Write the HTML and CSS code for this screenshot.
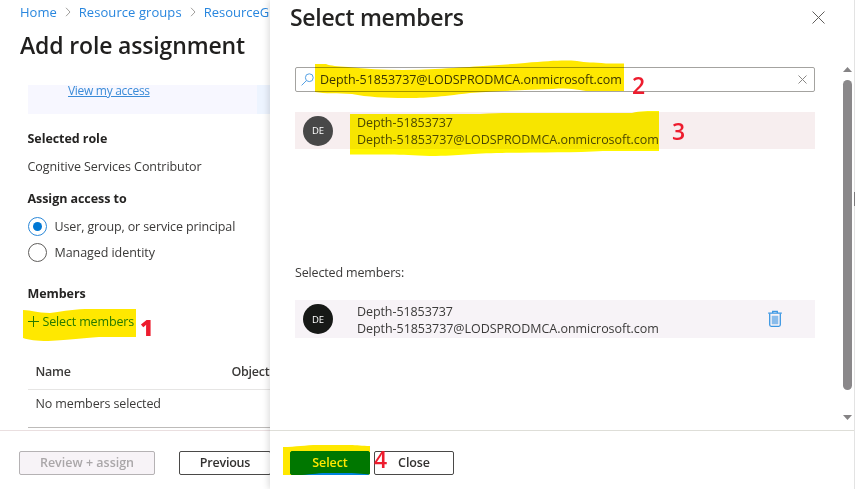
FILE: index.html
```html
<!DOCTYPE html>
<html lang="en">
<head>
<meta charset="utf-8">
<title>Add role assignment</title>
<link rel="stylesheet" href="styles.css">
</head>
<body>
<div class="app">
  <main class="blade">
    <nav class="crumbs">
      <a>Home</a><svg class="chev" viewBox="0 0 6 10"><path d="M1 .8 5 5 1 9.200"/></svg><a class="groups">Resource groups</a><svg class="chev" viewBox="0 0 6 10"><path d="M1 .8 5 5 1 9.200"/></svg><a>ResourceG</a>
    </nav>
    <h1 class="blade-title">Add role assignment</h1>
    <div class="content">
      <div class="banner"><a class="access">View my access</a></div>
      <h2 class="label role">Selected role</h2>
      <p class="value contributor">Cognitive Services Contributor</p>
      <h2 class="label assign">Assign access to</h2>
      <div class="option"><span class="radio checked"></span><span class="user-option">User, group, or service principal</span></div>
      <div class="option"><span class="radio"></span><span class="managed-option">Managed identity</span></div>
      <h2 class="label members">Members</h2>
      <a class="add"><svg viewBox="0 0 11 11"><path d="M5.500 0v11M0 5.500h11"/></svg><span>Select members</span></a>
      <div class="table">
        <div class="thead"><span class="name-col">Name</span><span>Object</span></div>
        <div class="tbody"><span>No members selected</span></div>
      </div>
    </div>
    <footer class="blade-footer">
      <button class="btn review">Review + assign</button>
      <button class="btn previous"><span>Previous</span></button>
    </footer>
  </main>
  <aside class="drawer">
    <header class="drawer-header">
      <h2><span>Select members</span></h2>
      <svg class="close" viewBox="0 0 13 13"><path d="M.5.5l12 12M12.500.5l-12 12"/></svg>
    </header>
    <div class="drawer-body">
      <div class="list">
        <div class="search">
          <svg class="lens" viewBox="0 0 13 13"><circle cx="8.300" cy="4.700" r="3.900"/><path d="M5.400 7.600.6 12.400"/></svg>
          <span class="email">Depth-51853737@LODSPRODMCA.onmicrosoft.com</span>
          <svg class="clear" viewBox="0 0 9 9"><path d="M.5.5l8 8M8.500.5l-8 8"/></svg>
        </div>
        <div class="person result">
          <span class="avatar">DE</span>
          <div class="who"><span class="short">Depth-51853737</span><span class="email">Depth-51853737@LODSPRODMCA.onmicrosoft.com</span></div>
        </div>
        <p class="selected-label"><span>Selected members:</span></p>
        <div class="person chosen">
          <span class="avatar">DE</span>
          <div class="who"><span class="short">Depth-51853737</span><span class="email">Depth-51853737@LODSPRODMCA.onmicrosoft.com</span></div>
          <svg class="trash" viewBox="0 0 14 18"><path class="can" d="M1.700 3.500v11.300q0 1.500 1.500 1.500h7.600q1.500 0 1.500-1.500V3.500"/><path class="lid" d="M.2 3.200h13.600M4.700 3V1.400h4.600V3"/><path class="slats" d="M4 6h6v8H4z"/></svg>
        </div>
      </div>
      <div class="scroll">
        <svg viewBox="0 0 9 5"><path d="M0 5 4.500 0 9 5z"/></svg>
        <span class="thumb"></span>
        <svg viewBox="0 0 9 5"><path d="M0 0h9L4.500 5z"/></svg>
      </div>
    </div>
    <footer class="drawer-footer">
      <button class="btn primary">Select</button>
      <button class="btn dismiss">Close</button>
    </footer>
  </aside>
  <span class="edge"></span>
  <svg class="marker" viewBox="0 0 855 489">
    <path d="M23 310C32 310 36 313 50 313C66 311 74 309 91 309H136V337H99C81 338 72 340 48 341C36 341 29 340 23 338Z"/>
    <path d="M315 64H326C331 66 337 66 348 67C374 70 405 71 435 69C480 66 500 65 525 63C550 61 563 60 577 61C586 63 593 62 606 63.500H624V91H586C574 89 567 88 553 89C525 90 497 91 470 93C438 97 427 98 405 98C386 98 367 97 352 94C337 93 325 94 315 92Z"/>
    <path class="on-row" d="M350 114H480C500 113 515 113 535 113H632C640 111 648 111 659 111V151H603C575 153 535 152 502 153C470 153 462 156 430 156C413 155 403 155 390 154.500H350Z"/>
    <path d="M283 447C296 447 305 445 318 445H350C357 445 362 446 370 446V474.500C362 474 355 473 345 473H326C316 473 309 475 298 475H283Z"/>
  </svg>
  <span class="step s1">1</span>
  <span class="step s2">2</span>
  <span class="step s3">3</span>
  <span class="step s4">4</span>
</div>
</body>
</html>
```
FILE: styles.css
```css
* { box-sizing: border-box; }
body { margin: 0; background: #fff; color: #3b3a39; font: 12.5px/17px "Open Sans", "Noto Sans", sans-serif; overflow: hidden; }
h1, h2, p { margin: 0; }
svg { display: block; fill: none; flex: none; }
.app { position: relative; display: grid; grid-template-columns: 270px 585px; height: 489px; overflow: hidden; }

.blade { display: flex; flex-direction: column; overflow: hidden; white-space: nowrap; }
.crumbs { display: flex; align-items: center; height: 24px; padding-left: 20px; font-size: 13px; color: #2886de; flex: none; }
.groups { letter-spacing: .07px; }
.chev { width: 6px; height: 10px; margin: 0 8px; stroke: #a19f9d; }
.blade-title { height: 61px; padding-left: 20px; font-size: 23px; line-height: 43px; font-weight: 600; letter-spacing: -.15px; color: #201f1e; flex: none; }
.content { height: 345px; padding-left: 27.5px; letter-spacing: -.06px; flex: none; }
.banner { height: 29px; padding-left: 40.5px; background: linear-gradient(90deg, #f7f7ff 229px, #edf4ff 229px); line-height: 11px; font-size: 12px; letter-spacing: -.3px; }
.access { color: #3a8bd8; text-decoration: underline; }
.label { font-size: 12.5px; line-height: 18px; font-weight: 700; color: #252423; }
.role { margin-top: 16px; }
.contributor { margin-top: 10px; line-height: 18px; }
.assign { margin-top: 14px; margin-bottom: 5px; }
.option { display: flex; align-items: center; gap: 8px; height: 26px; }
.user-option { letter-spacing: -.13px; }
.radio { display: grid; place-items: center; width: 19px; height: 19px; border: 1px solid #605e5c; border-radius: 50%; }
.checked { border-color: #2b88d8; }
.checked::after { content: ""; width: 9px; height: 9px; border-radius: 50%; background: #0078d4; }
.members { margin-top: 20px; }
.add { display: flex; align-items: center; gap: 4px; height: 20px; margin-top: 8px; color: #2886de; letter-spacing: -.15px; }
.add svg { width: 11px; height: 11px; stroke: #2886de; }
.table { margin-top: 22px; border-bottom: 1px solid #bdbbb9; }
.thead { display: grid; grid-template-columns: 196px 1fr; align-items: center; height: 37px; padding-left: 8px; border-bottom: 1px solid #e6e5e4; font-weight: 600; letter-spacing: -.25px; }
.tbody { display: flex; align-items: center; height: 37px; padding: 0 0 10px 8px; letter-spacing: -.12px; }
.blade-footer { display: flex; gap: 24px; height: 59px; padding: 20px 0 0 19px; border-top: 1px solid #eadfe0; flex: none; }

.btn { display: grid; place-items: center; height: 24px; padding: 0; border: 1px solid #4a4948; border-radius: 2px; background: #fff; color: #323130; font: 600 12.5px/18px "Open Sans", "Noto Sans", sans-serif; flex: none; }
.review { width: 136px; border-color: #b5b2b4; background: #f7f3f7; color: #aaa7a9; }
.previous { width: 92px; letter-spacing: -.2px; }

.drawer { position: relative; display: flex; flex-direction: column; background: #fff; border-right: 1px solid #e3e3e3; box-shadow: -1px 0 7px rgba(0, 0, 0, .16); }
.drawer-header { display: flex; justify-content: space-between; height: 67px; padding: 0 29px 0 20px; color: #252423; flex: none; }
.drawer-header h2 { font-size: 23px; line-height: 34px; font-weight: 600; letter-spacing: -.3px; }
.close { width: 13px; height: 13px; margin-top: 11px; stroke: #605e5c; }
.drawer-body { display: flex; justify-content: space-between; height: 363px; padding: 0 2px 0 25px; flex: none; }
.list { width: 520px; }
.search { display: flex; align-items: center; height: 25px; padding: 0 7px 0 5px; border: 1px solid #a4a3a0; border-radius: 2px; }
.lens { width: 13px; height: 13px; margin-right: 6px; stroke: #54a0e4; }
.clear { width: 9px; height: 9px; margin-left: auto; stroke: #8a8886; }
.email { letter-spacing: -.05px; }
.person { display: flex; align-items: center; padding: 0 33px 0 8px; }
.result { height: 37px; margin-top: 20px; background: #f7eeef; }
.result .who { color: #4c4a49; margin-top: 0; }
.chosen { height: 38px; background: #f7f3f7; }
.avatar { display: grid; place-items: center; width: 30px; height: 30px; margin-right: 24px; border-radius: 50%; background: #484848; color: #fff; font-size: 9.500px; }
.chosen .avatar { background: #171917; }
.who { display: flex; flex-direction: column; margin-top: 2px; }
.short { letter-spacing: -.08px; }
.trash { width: 14px; height: 18px; margin-left: auto; stroke: #3b97e3; }
.can, .lid { stroke-width: 1.300; }
.slats { fill: #8abceb; stroke: #8abceb; stroke-width: .5; }
.selected-label { height: 151px; padding-top: 115px; letter-spacing: -.15px; }
.scroll { display: flex; flex-direction: column; align-items: center; width: 9px; }
.scroll svg { width: 9px; height: 5px; fill: #858385; }
.thumb { width: 9px; height: 310px; margin: 8px 0 25px; border-radius: 5px; background: #8a888a; }
.drawer-footer { display: flex; gap: 4px; height: 59px; padding: 20px 0 0 20px; border-top: 1px solid #deded8; flex: none; }
.drawer-footer .btn { width: 80px; letter-spacing: -.1px; }
.drawer-footer .primary { background: #0083dd; border-color: #0083dd; color: #fff; }
.edge { position: absolute; right: 0; top: 192px; width: 1px; height: 14px; background: #7c7a7c; }

.marker { position: absolute; inset: 0; width: 855px; height: 489px; fill: #ffe800; mix-blend-mode: multiply; }
.on-row { fill: #fff600; }
.step { position: absolute; color: #ed1c2e; font: 600 23px/28px "Open Sans", sans-serif; }
.s1 { left: 140px; top: 313px; font-weight: 800; font-size: 23px; }
.s2 { left: 632px; top: 71px; }
.s3 { left: 672px; top: 117px; }
.s4 { left: 374px; top: 445px; }
```
